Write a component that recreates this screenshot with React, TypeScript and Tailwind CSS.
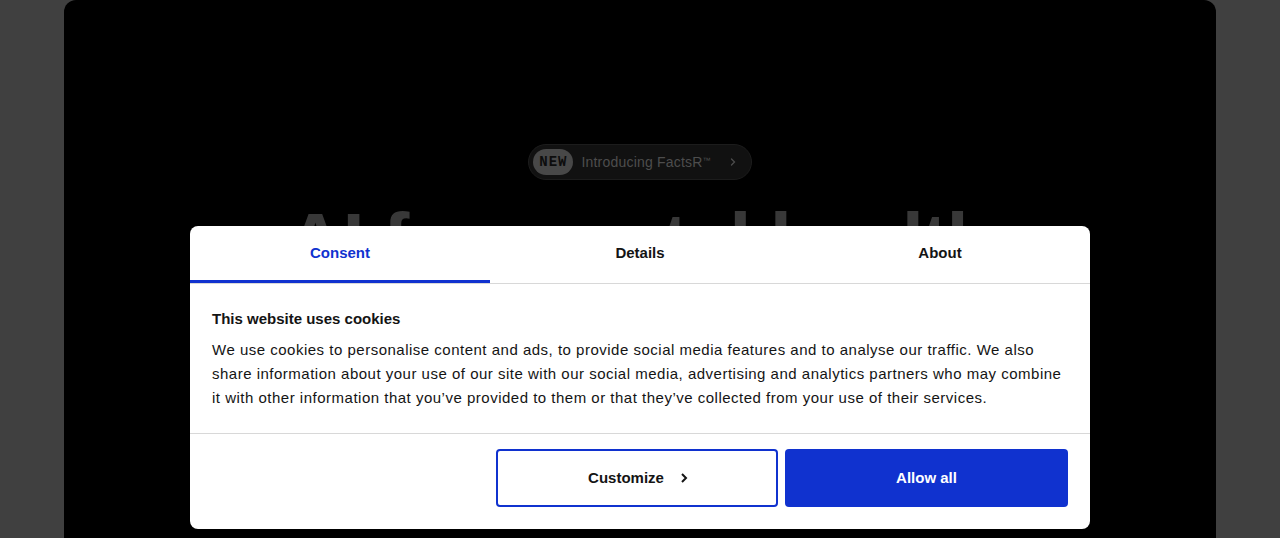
import React, { useState } from 'react';

const tabs = ['Consent', 'Details', 'About'];

const App: React.FC = () => {
  const [active, setActive] = useState('Consent');

  return (
    <div
      className="h-[538px] w-full overflow-hidden bg-[#404040] px-16"
      style={{ fontFamily: '"Liberation Sans", Arial, sans-serif' }}
    >
      {/* Dimmed page behind the dialog */}
      <div className="relative h-[600px] rounded-t-xl bg-black">
        <div className="flex flex-col items-center pt-[144px]">
          <div className="flex h-9 items-center gap-2 rounded-full border border-[#1c1c1c] bg-[#111] pl-[4px] pr-[12px]">
            <span className="flex h-[26px] items-center rounded-full bg-[#484848] px-[6px] font-['Liberation_Mono',monospace] text-[14px] font-bold tracking-[1px] text-[#0d0d0d]">
              NEW
            </span>
            <span className="text-[14px] tracking-[0.2px] text-[#4d4d4d]">
              Introducing FactsR<sup className="text-[8px]">™</sup>
            </span>
            <svg width="12" height="12" viewBox="0 0 12 12" className="ml-2">
              <path d="M4.5 3l3 3-3 3" fill="none" stroke="#4d4d4d" strokeWidth="1.3" strokeLinecap="round" />
            </svg>
          </div>
          <h1 className="mt-[22px] text-[80px] font-semibold leading-none tracking-tight text-[#383838]">
            AI for mental health
          </h1>
        </div>

        {/* Cookie consent dialog */}
        <div className="absolute left-[126px] top-[226px] w-[900px] rounded-lg bg-white text-[#141414]">
          <div className="flex border-b border-[#d8d8d8]">
            {tabs.map((t) => (
              <button
                key={t}
                onClick={() => setActive(t)}
                className={`h-[57px] flex-1 border-b-[3px] text-[15px] font-bold ${
                  active === t ? 'border-[#1032cf] text-[#1032cf]' : 'border-transparent text-[#141414]'
                }`}
              >
                {t}
              </button>
            ))}
          </div>

          <div className="border-b border-[#d8d8d8] px-[22px] pb-[23px] pt-[23px]">
            <h2 className="text-[15px] font-bold leading-6">This website uses cookies</h2>
            <p className="mt-[7px] text-[15px] leading-6 tracking-[0.5px]">
              We use cookies to personalise content and ads, to provide social media features and to analyse our traffic. We also
              <br />
              share information about your use of our site with our social media, advertising and analytics partners who may combine
              <br />
              it with other information that you’ve provided to them or that they’ve collected from your use of their services.
            </p>
          </div>

          <div className="flex justify-end gap-[7px] px-[22px] pb-[22px] pt-[15px]">
            <button className="flex h-[58px] w-[282px] items-center justify-center gap-[14px] rounded-[4px] border-2 border-[#1032cf] pl-[4px] text-[15px] font-bold">
              Customize
              <svg width="12" height="12" viewBox="0 0 12 12">
                <path d="M4 2l4 4-4 4" fill="none" stroke="#141414" strokeWidth="2" />
              </svg>
            </button>
            <button className="h-[58px] w-[283px] rounded-[4px] bg-[#1032cf] text-[15px] font-bold text-white">
              Allow all
            </button>
          </div>
        </div>
      </div>
    </div>
  );
};

export default App;
